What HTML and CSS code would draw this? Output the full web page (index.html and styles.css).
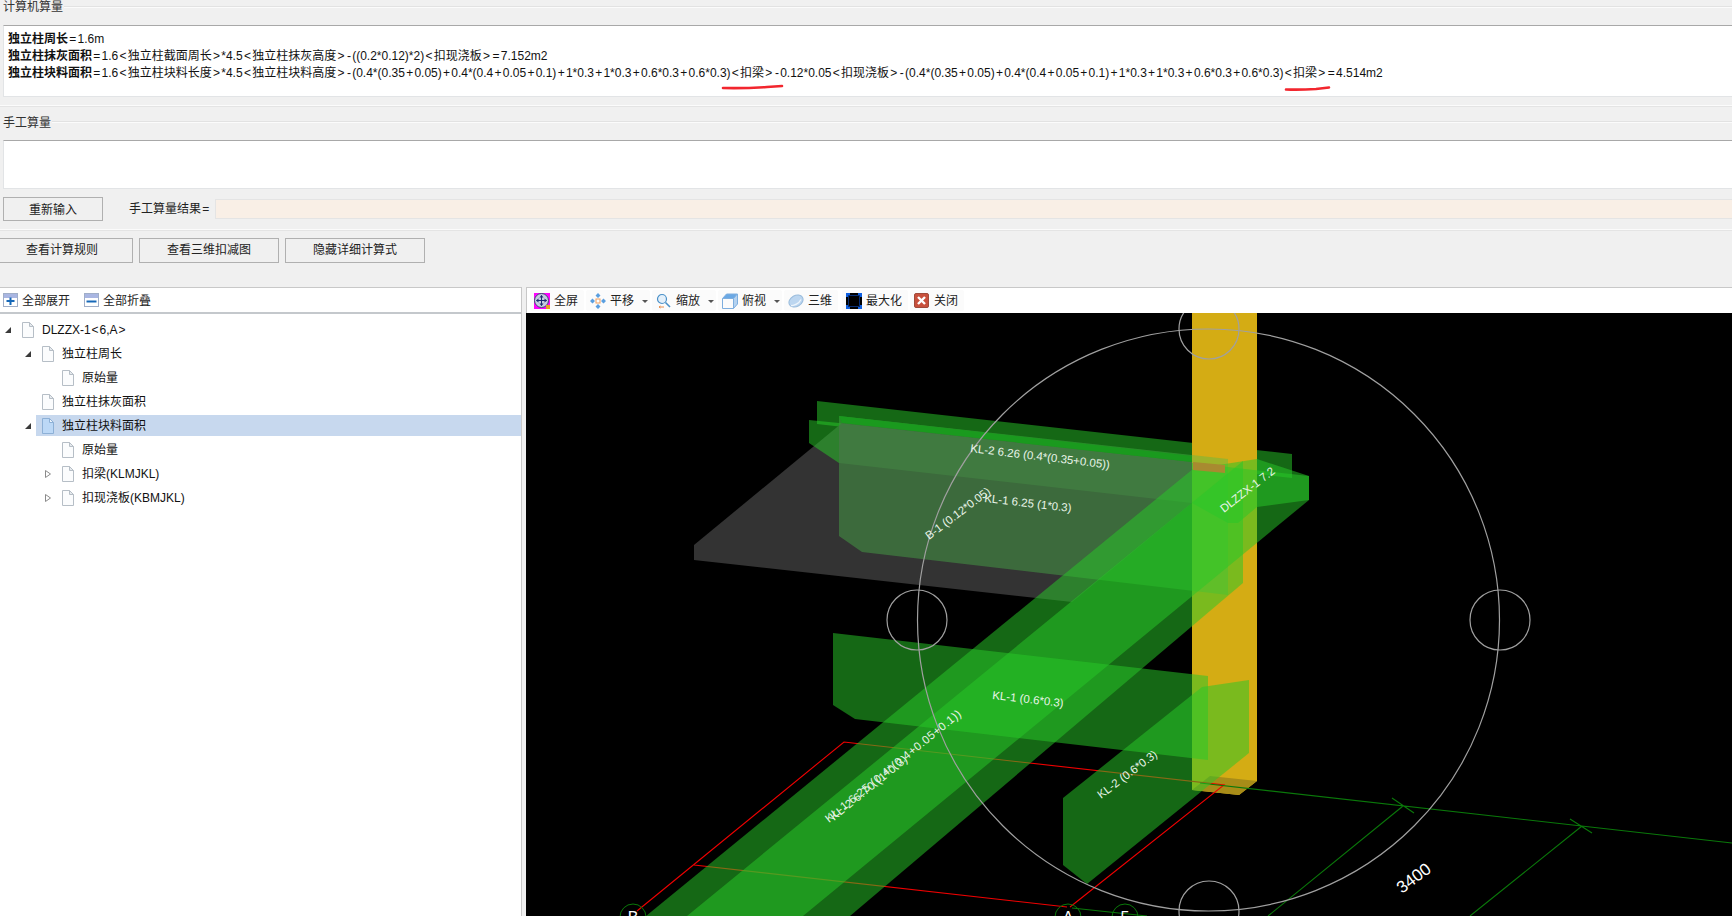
FILE: index.html
```html
<!DOCTYPE html>
<html lang="zh">
<head>
<meta charset="utf-8">
<title>计算机算量</title>
<link rel="stylesheet" href="styles.css">
</head>
<body>
<section class="group">
  <div class="legend"><span>计算机算量</span></div>
  <div class="calc-box">
    <p><b>独立柱周长</b><i class="op">=</i>1.6m</p>
    <p><b>独立柱抹灰面积</b><i class="op">=</i>1.6<i class="op">&lt;</i>独立柱截面周长<i class="op">&gt;</i>*4.5<i class="op">&lt;</i>独立柱抹灰高度<i class="op">&gt;</i><i class="op">-</i>((0.2*0.12)*2)<i class="op">&lt;</i>扣现浇板<i class="op">&gt;</i><i class="op">=</i>7.152m2</p>
    <p><b>独立柱块料面积</b><i class="op">=</i>1.6<i class="op">&lt;</i>独立柱块料长度<i class="op">&gt;</i>*4.5<i class="op">&lt;</i>独立柱块料高度<i class="op">&gt;</i><i class="op">-</i>(0.4*(0.35<i class="op">+</i>0.05)<i class="op">+</i>0.4*(0.4<i class="op">+</i>0.05<i class="op">+</i>0.1)<i class="op">+</i>1*0.3<i class="op">+</i>1*0.3<i class="op">+</i>0.6*0.3<i class="op">+</i>0.6*0.3)<i class="op">&lt;</i>扣梁<i class="op">&gt;</i><i class="op">-</i>0.12*0.05<i class="op">&lt;</i>扣现浇板<i class="op">&gt;</i><i class="op">-</i>(0.4*(0.35<i class="op">+</i>0.05)<i class="op">+</i>0.4*(0.4<i class="op">+</i>0.05<i class="op">+</i>0.1)<i class="op">+</i>1*0.3<i class="op">+</i>1*0.3<i class="op">+</i>0.6*0.3<i class="op">+</i>0.6*0.3)<i class="op">&lt;</i>扣梁<i class="op">&gt;</i><i class="op">=</i>4.514m2</p>
    <svg class="marks" width="1732" height="72" viewBox="0 25 1732 72">
      <path class="mark" d="M723 88Q745 88.500 767 87L782 86"/>
      <path class="mark" d="M1286 89.500Q1300 90 1316 89L1329 87.500"/>
    </svg>
  </div>
</section>
<section class="group group-manual">
  <div class="legend legend-low"><span>手工算量</span></div>
  <div class="manual-box"></div>
  <div class="input-row">
    <button class="btn btn-reset">重新输入</button>
    <label class="result-label">手工算量结果<i class="op">=</i></label>
    <div class="result-field"></div>
  </div>
</section>
<div class="actions">
  <button class="btn btn-rule">查看计算规则</button>
  <button class="btn btn-view">查看三维扣减图</button>
  <button class="btn btn-view">隐藏详细计算式</button>
</div>
<main class="panels">
  <aside class="tree-panel">
    <div class="tree-bar">
      <span class="tree-tool">
        <svg class="ico-box" width="15" height="14" viewBox="0 0 15 14"><rect class="box-bg" x=".5" y=".5" width="14" height="13"/><rect class="box-top" x="1" y="1" width="13" height="4"/><path class="box-sign" d="M3.500 8h8M7.500 4.500v7.500"/></svg>
        全部展开
      </span>
      <span class="tree-tool">
        <svg class="ico-box" width="15" height="14" viewBox="0 0 15 14"><rect class="box-bg" x=".5" y=".5" width="14" height="13"/><rect class="box-top" x="1" y="1" width="13" height="4"/><path class="box-sign" d="M2.500 8.500h10"/></svg>
        全部折叠
      </span>
    </div>
    <ul class="tree">
      <li class="row lv1"><svg class="arrow" width="6" height="6" viewBox="0 0 6 6"><path class="arrow-open" d="M6 0v6H0z"/></svg><div class="node"><svg class="file" width="12" height="16" viewBox="0 0 12 16"><path class="file-body" d="M.5.500h7l4 4v11H.5z"/><path class="file-fold" d="M7.500.500v4h4z"/></svg><span>DLZZX-1<i class="op-small">&lt;</i>6,A<i class="op-small">&gt;</i></span></div></li>
      <li class="row lv2"><svg class="arrow" width="6" height="6" viewBox="0 0 6 6"><path class="arrow-open" d="M6 0v6H0z"/></svg><div class="node"><svg class="file" width="12" height="16" viewBox="0 0 12 16"><path class="file-body" d="M.5.500h7l4 4v11H.5z"/><path class="file-fold" d="M7.500.500v4h4z"/></svg>独立柱周长</div></li>
      <li class="row lv3"><span class="arrow-space"></span><div class="node"><svg class="file" width="12" height="16" viewBox="0 0 12 16"><path class="file-body" d="M.5.500h7l4 4v11H.5z"/><path class="file-fold" d="M7.500.500v4h4z"/></svg>原始量</div></li>
      <li class="row lv2"><span class="arrow-space"></span><div class="node"><svg class="file" width="12" height="16" viewBox="0 0 12 16"><path class="file-body" d="M.5.500h7l4 4v11H.5z"/><path class="file-fold" d="M7.500.500v4h4z"/></svg>独立柱抹灰面积</div></li>
      <li class="row lv2"><svg class="arrow" width="6" height="6" viewBox="0 0 6 6"><path class="arrow-open" d="M6 0v6H0z"/></svg><div class="node node-selected"><svg class="file file-selected" width="12" height="16" viewBox="0 0 12 16"><path class="file-body" d="M.5.500h7l4 4v11H.5z"/><path class="file-fold" d="M7.500.500v4h4z"/></svg>独立柱块料面积</div></li>
      <li class="row lv3"><span class="arrow-space"></span><div class="node"><svg class="file" width="12" height="16" viewBox="0 0 12 16"><path class="file-body" d="M.5.500h7l4 4v11H.5z"/><path class="file-fold" d="M7.500.500v4h4z"/></svg>原始量</div></li>
      <li class="row lv3"><svg class="arrow" width="6" height="8" viewBox="0 0 6 8"><path class="arrow-closed" d="M.5.500l5 3.500-5 3.500z"/></svg><div class="node"><svg class="file" width="12" height="16" viewBox="0 0 12 16"><path class="file-body" d="M.5.500h7l4 4v11H.5z"/><path class="file-fold" d="M7.500.500v4h4z"/></svg>扣梁(KLMJKL)</div></li>
      <li class="row lv3"><svg class="arrow" width="6" height="8" viewBox="0 0 6 8"><path class="arrow-closed" d="M.5.500l5 3.500-5 3.500z"/></svg><div class="node"><svg class="file" width="12" height="16" viewBox="0 0 12 16"><path class="file-body" d="M.5.500h7l4 4v11H.5z"/><path class="file-fold" d="M7.500.500v4h4z"/></svg>扣现浇板(KBMJKL)</div></li>
    </ul>
  </aside>
  <section class="view-panel">
    <div class="view-bar">
      <span class="tool">
        <svg width="16" height="16" viewBox="0 0 16 16"><rect class="i-magenta" width="16" height="16"/><circle class="i-globe" cx="7.500" cy="7.500" r="7"/><path class="i-navy" d="M7.500 2.500v10M2.500 7.500h10"/><path class="i-navyfill" d="M7.500 2l-2 2.500h4zM7.500 13l-2-2.500h4zM2 7.500l2.500-2v4zM13 7.500l-2.500-2v4z"/><rect class="i-orange" x="12" y="12" width="4" height="4"/></svg>
        全屏
      </span>
      <span class="tool tool-menu">
        <svg width="16" height="16" viewBox="0 0 16 16"><path class="i-blue" d="M8 0l2.500 2.500L8 5 5.500 2.500zM8 11l2.500 2.500L8 16l-2.500-2.500zM2.500 5.500L5 8l-2.500 2.500L0 8zM13.500 5.500L16 8l-2.500 2.500L11 8z"/><rect class="i-ocenter" x="6" y="6" width="4" height="4"/></svg>
        平移<i class="caret"></i>
      </span>
      <span class="tool tool-menu">
        <svg width="16" height="16" viewBox="0 0 16 16"><circle class="i-lens" cx="6" cy="6" r="4.500"/><path class="i-handle" d="M9.500 9.500l4.500 4.500"/><path class="i-oline" d="M3 14h5M3 14l1.500-1M3 14l1.500 1"/></svg>
        缩放<i class="caret"></i>
      </span>
      <span class="tool tool-menu">
        <svg width="16" height="16" viewBox="0 0 16 16"><path class="i-cubetop" d="M.5 5.500l4-4.500h11l-4 4.500z"/><path class="i-cubeside" d="M11.500 5.500l4-4.500v10l-4 4.500z"/><path class="i-cube" d="M.5 5.500h11v10H.5zM.5 5.500l4-4.500h11v10l-4 4.500M11.500 5.500l4-4.500"/></svg>
        俯视<i class="caret"></i>
      </span>
      <span class="tool">
        <svg width="16" height="16" viewBox="0 0 16 16"><ellipse class="i-planet" cx="8" cy="8" rx="7.500" ry="5.500" transform="rotate(-30 8 8)"/><path class="i-ring" d="M3 12.500c3 .5 8-2 10-6"/></svg>
        三维
      </span>
      <span class="tool tool-max">
        <svg width="16" height="16" viewBox="0 0 16 16"><rect class="i-black" width="16" height="16"/><rect class="i-bluethin" x="2.500" y="2.500" width="11" height="11"/><path class="i-bluecorner" d="M1 4V1h3M12 1h3v3M15 12v3h-3M4 15H1v-3"/></svg>
        最大化
      </span>
      <span class="tool">
        <svg width="16" height="16" viewBox="0 0 16 16"><rect class="i-red" x=".5" y=".5" width="14" height="14" rx="1.500"/><path class="i-x" d="M4 4l7 7M11 4l-7 7"/></svg>
        关闭
      </span>
    </div>
    <svg class="scene" width="1206" height="603" viewBox="526 313 1206 603">
      <polygon class="g" points="817,401 1292,454 1292,478 817,424"/>
      <polygon class="col" points="1192,313 1257,313 1257,781 1239,795 1192,790"/>
      <polygon class="col-base" points="1192,790 1210,776 1257,781 1239,795"/>
      <circle class="ring" cx="1209" cy="329" r="30"/>
      <path class="red" d="M637 911L844 742L1224 785L1070 907M694 865L1067 907"/>
      <path class="dark" d="M1200 783L1732 843M1072 908L1147 916M1392 798L1414 813M1570 819L1592 833M1403 806L1268 916M1582 826L1470 916"/>
      <polygon class="slab" points="694,545 842,423 1192,462 1192,503 1072,602 694,560"/>
      <polygon class="c" points="839,416 1228,459 1228,595 862,552 839,536"/>
      <polygon class="c-light" points="839,423 1192,462 1192,503 839,463"/>
      <polygon class="stripe" points="839,416 1192,456 1192,462 842,423"/>
      <polygon class="g" points="809,420 839,423 839,463 809,443"/>
      <polygon class="g" points="1192,463 1309,476 1309,500 1257,507 1238,523 1228,523 1192,503"/>
      <polygon class="g" points="646,916 1193,469 1257,459 1309,476 1309,500 803,916"/>
      <polygon class="g" points="687,916 1243,461 1243,583 850,916"/>
      <polygon class="g" points="833,633 1208,676 1208,760 855,719 833,705"/>
      <polygon class="g" points="1063,798 1202,687 1249,680 1249,753 1087,884 1063,865"/>
      <polygon class="brown" points="1193,462 1225,465 1225,473 1193,470"/>
      <circle class="ring" cx="1208.500" cy="620" r="291"/>
      <circle class="ring" cx="917" cy="620" r="30"/>
      <circle class="ring" cx="1500" cy="620" r="30"/>
      <circle class="ring" cx="1209" cy="911" r="30"/>
      <circle class="axis" cx="633" cy="917" r="13"/>
      <circle class="axis" cx="1068" cy="917" r="13"/>
      <circle class="axis" cx="1125" cy="917" r="13"/>
      <text class="axis-label" x="633" y="923">B</text>
      <text class="axis-label" x="1068" y="923">A</text>
      <text class="axis-label" x="1125" y="923">5</text>
      <text class="lbl" transform="translate(970 452) rotate(6.800)">KL-2 6.26 (0.4*(0.35+0.05))</text>
      <text class="lbl" transform="translate(984 502) rotate(6.500)">KL-1 6.25 (1*0.3)</text>
      <text class="lbl" transform="translate(929 540) rotate(-37)">B-1 (0.12*0.05)</text>
      <text class="lbl" transform="translate(1224 513) rotate(-38)">DLZZX-1 7.2</text>
      <text class="lbl" transform="translate(992 699) rotate(6.500)">KL-1 (0.6*0.3)</text>
      <text class="lbl" transform="translate(1101 799) rotate(-37)">KL-2 (0.6*0.3)</text>
      <text class="lbl lbl-wide" transform="translate(829 823) rotate(-39)">KL-1 6.25 (0.4*(0.4+0.05+0.1))</text>
      <text class="lbl lbl-wide" transform="translate(834 821) rotate(-39)">KL-2 6.70 (1*0.3)</text>
      <text class="dim" transform="translate(1402 894) rotate(-37)">3400</text>
    </svg>
  </section>
</main>
</body>
</html>
```
FILE: styles.css
```css
* { box-sizing: border-box; }
html, body { margin: 0; padding: 0; }
body {
  width: 1732px;
  height: 916px;
  overflow: hidden;
  background: #f0f0f0;
  color: #111;
  font: 12px/17px "Liberation Sans", "Noto Sans CJK SC", sans-serif;
}
p { margin: 0; white-space: nowrap; }
b { font-weight: 700; }
ul { margin: 0; padding: 0; list-style: none; }
.op { font-style: normal; margin: 0 1.250px; }
.op-small { font-style: normal; margin: 0 .9px; }

.group { position: relative; }
.group-manual {
  margin-top: 8px;
  padding-top: 9px;
  border-top: 1px solid #fbfbfb;
  box-shadow: inset 0 1px 0 #e4e4e4;
}
.legend {
  height: 25px;
  display: flex;
  padding-left: 3px;
  color: #333;
  line-height: 13px;
}
.legend span { padding: 1px 1px 0 0; }
.legend-low span { padding-top: 2px; }
.legend::after {
  content: "";
  flex: 1;
  height: 2px;
  margin-top: 6px;
  background: linear-gradient(#e2e2e2 50%, #fbfbfb 50%);
}
.calc-box, .manual-box {
  position: relative;
  margin-left: 3px;
  background: #fff;
  border-top: 1px solid #a8a8a8;
  border-left: 1px solid #e2e4e6;
  border-bottom: 1px solid #e2e4e6;
}
.calc-box { height: 72px; padding: 5px 0 0 4px; color: #111; }
.manual-box { height: 49px; }
.marks { position: absolute; left: -4px; top: -1px; pointer-events: none; }
.mark { fill: none; stroke: #f2262e; stroke-width: 2.600; stroke-linecap: round; }

.btn {
  height: 25px;
  margin: 0;
  padding: 0;
  background: #f0f0f0;
  border: 1px solid #b0b0b0;
  font: inherit;
  color: #222;
}
.input-row {
  display: flex;
  align-items: center;
  height: 24px;
  margin-top: 8px;
  padding-left: 3px;
}
.btn-reset { width: 100px; height: 24px; padding-top: 2px; }
.result-label { margin-left: 26px; width: 86px; padding-top: 1px; color: #222; }
.result-field {
  flex: 1;
  height: 20px;
  margin-right: -3px;
  background: #f9efe6;
  border: 1px solid #e4e4e4;
}
.actions {
  display: flex;
  gap: 6px;
  height: 33px;
  margin-top: 8px;
  padding-top: 8px;
  border-top: 1px solid #fbfbfb;
  box-shadow: inset 0 1px 0 #e4e4e4;
}
.btn-rule { width: 133px; padding-right: 8px; border-left: 0; }
.btn-view { width: 140px; }

.panels {
  display: flex;
  height: 629px;
  margin-top: 25px;
}
.tree-panel {
  width: 522px;
  background: #fff;
  border-top: 1px solid #c8c8c8;
  border-right: 1px solid #c8c8c8;
}
.tree-bar {
  display: flex;
  align-items: center;
  gap: 14px;
  height: 26px;
  padding: 2px 0 0 3px;
  border-bottom: 2px solid #c4c8cc;
}
.tree-bar svg { margin-top: -2px; }
.tree-tool { display: flex; align-items: center; gap: 4px; color: #222; }
.box-bg { fill: #fff; stroke: #a0aec8; }
.box-top { fill: #a9b6e2; }
.box-sign { fill: none; stroke: #1668b8; stroke-width: 2; }

.tree { padding-top: 5px; }
.row { display: flex; align-items: center; height: 21px; margin-bottom: 3px; }
.lv1 { padding-left: 5px; }
.lv2 { padding-left: 25px; }
.lv3 { padding-left: 45px; }
.arrow, .arrow-space { flex: none; width: 6px; margin-right: 5px; }
.arrow-open { fill: #3a3a3a; }
.arrow-closed { fill: #fff; stroke: #8a8a8a; }
.node { flex: 1; display: flex; align-items: center; height: 21px; padding: 2px 0 0 6px; color: #111; }
.node-selected { background: #c7d8ee; }
.file { flex: none; margin: -2px 8px 0 0; }
.file-body { fill: #fbfcfd; stroke: #b6bec6; }
.file-fold { fill: #e6eaee; stroke: #b6bec6; }
.file-selected .file-body { fill: #bcd8f6; stroke: #8db0d6; }
.file-selected .file-fold { fill: #eaf2fb; stroke: #8db0d6; }

.view-panel { flex: 1; margin-left: 4px; min-width: 0; }
.view-bar {
  display: flex;
  align-items: center;
  gap: 2px;
  height: 26px;
  padding-left: 3px;
  background: #fff;
  border-top: 1px solid #c8c8c8;
  border-left: 1px solid #c8c8c8;
}
.tool {
  display: flex;
  align-items: center;
  gap: 4px;
  height: 21px;
  padding: 2px 6px 0 4px;
  background: #fbfbfb;
  border-radius: 2px;
  color: #222;
}
.tool svg { margin-top: -2px; }
.tool-menu { padding-right: 2px; }
.tool-max { margin-left: 2px; }
.caret {
  width: 0;
  height: 0;
  margin-left: 4px;
  border: 3px solid transparent;
  border-top: 3px solid #555;
  border-bottom: 0;
}
.i-magenta { fill: #f0f; }
.i-globe { fill: #c4cce0; stroke: #3c4a70; }
.i-navy { fill: none; stroke: #1c2c70; }
.i-navyfill { fill: #1c2c70; }
.i-orange { fill: #e8a020; }
.i-blue { fill: #5a9fe0; }
.i-ocenter { fill: #fff; stroke: #f0a060; }
.i-lens { fill: #e4f0fa; stroke: #4a90c8; stroke-width: 1.200; }
.i-handle { fill: none; stroke: #4a90c8; stroke-width: 1.600; }
.i-oline { fill: none; stroke: #e89050; }
.i-cubetop { fill: #6aa8e4; }
.i-cubeside { fill: #b4d2f0; }
.i-cube { fill: none; stroke: #7eaede; }
.i-planet { fill: #bcd6f0; stroke: #9abcdc; }
.i-ring { fill: none; stroke: #eef5fc; stroke-width: 1.300; }
.i-black { fill: #000; }
.i-bluecorner { fill: none; stroke: #1060e0; stroke-width: 2; }
.i-bluethin { fill: none; stroke: #0a3a90; stroke-width: .8; }
.i-red { fill: #c8503c; stroke: #a04a3a; }
.i-x { fill: none; stroke: #fff; stroke-width: 2.400; }

.scene { display: block; background: #000; }
.g { fill: #28c828; fill-opacity: .52; }
.col { fill: #d4ac14; }
.col-base { fill: #a88c18; }
.slab { fill: #333; }
.c { fill: #4cbd4c; fill-opacity: .4; }
.c-light { fill: #64ff64; fill-opacity: .11; }
.stripe { fill: #1a9a1e; }
.brown { fill: #a88a30; }
.red { fill: none; stroke: #f00000; stroke-width: 1.100; }
.dark { fill: none; stroke: #0a780a; stroke-width: 1.100; }
.ring { fill: none; stroke: #a0a0a0; stroke-width: 1.200; }
.axis { fill: none; stroke: #0a780a; }
.axis-label { fill: #fff; font: 16px "Liberation Sans", sans-serif; text-anchor: middle; }
.lbl { fill: #e8f4e8; font: 11.500px "Liberation Sans", sans-serif; }
.lbl-wide { letter-spacing: .5px; }
.dim { fill: #fff; font: 17px "Liberation Sans", sans-serif; }
```
